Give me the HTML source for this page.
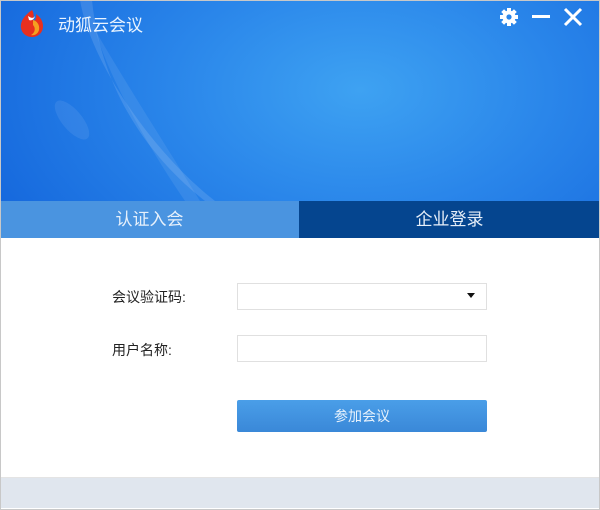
<!DOCTYPE html>
<html><head><meta charset="utf-8"><style>
*{margin:0;padding:0;box-sizing:border-box}
body{width:600px;height:510px;overflow:hidden;background:#fff;font-family:"Liberation Sans","Noto Sans CJK SC",sans-serif;position:relative}
.win{position:absolute;left:0;top:0;width:600px;height:510px;border:1px solid #c8c8c8}
.hdr{position:absolute;left:0;top:0;width:600px;height:201px;overflow:hidden;
background:radial-gradient(ellipse 420px 260px at 360px 90px,#3ea2f2 0%,#2a86ea 45%,#1466dc 100%)}
.title{position:absolute;left:58px;top:11px;color:#eaf4ff;font-size:17px}
.tabs{position:absolute;top:201px;left:0;width:600px;height:37px}
.t1{position:absolute;left:0;top:0;width:299px;height:37px;background:#4a94e0;color:#e6f0fb;font-size:17px;text-align:center;line-height:37px}
.t2{position:absolute;left:299px;top:0;width:301px;height:37px;background:#05458f;color:#e6eef8;font-size:17px;text-align:center;line-height:37px}
.lbl{position:absolute;left:112px;font-size:14px;color:#222}
.inp{position:absolute;left:237px;width:250px;height:27px;border:1px solid #e0e0e0;background:#fff}
.btn{position:absolute;left:237px;top:400px;width:250px;height:32px;background:linear-gradient(#4a9ee8,#3a88d8);color:#e8f2fc;font-size:14px;text-align:center;line-height:32px;border-radius:2px}
.ftr{position:absolute;left:1px;top:477px;width:598px;height:31px;background:#e0e6ee;border-top:1px solid #e4e4e4}
</style></head><body>
<div class="hdr">
<svg width="600" height="201" style="position:absolute;left:0;top:0">
<path d="M80 0 C90 60 150 150 215 201 L205 201 C140 150 100 80 92 0Z" fill="#ffffff" opacity="0.12"/>
<path d="M95 30 C130 90 175 160 200 201 L185 201 C150 150 110 80 95 30Z" fill="#ffffff" opacity="0.08"/>
<ellipse cx="72" cy="120" rx="10" ry="24" transform="rotate(-40 72 120)" fill="#fff" opacity="0.08"/>
<g transform="translate(19,8)">
<path d="M13 2 C6 7 1 13 2 20 C3 26 8 29 13 29 C19 29 24 25 24 18 C24 12 20 8 17 6 C18 10 16 13 14 13 C15 9 15 5 13 2Z" fill="#e8301e"/>
<path d="M14 12 C18 13 21 17 20 22 C19 26 15 28 12 27 C16 25 17 20 14 17Z" fill="#f5a020"/>
<path d="M9 8 C12 10 14 11 16 8 C15 12 12 13 10 12Z" fill="#fff"/>
</g>
<g transform="translate(509,17)" fill="#fff">
<circle r="6.5"/>
<g><rect x="-2" y="-9" width="4" height="18"/><rect x="-9" y="-2" width="18" height="4"/>
<rect x="-2" y="-9" width="4" height="18" transform="rotate(45)"/><rect x="-2" y="-9" width="4" height="18" transform="rotate(-45)"/></g>
<circle r="2.6" fill="#2a86ea"/>
</g>
<rect x="532" y="15" width="18" height="3" fill="#fff"/>
<path d="M565 9 L581 25 M581 9 L565 25" stroke="#fff" stroke-width="3"/>
</svg>
<div class="title">动狐云会议</div>
</div>
<div class="tabs"><div class="t1">认证入会</div><div class="t2">企业登录</div></div>
<div class="lbl" style="top:287px">会议验证码:</div>
<div class="inp" style="top:283px"><span style="position:absolute;right:11px;top:9px;width:0;height:0;border-left:4px solid transparent;border-right:4px solid transparent;border-top:5px solid #111"></span></div>
<div class="lbl" style="top:340px">用户名称:</div>
<div class="inp" style="top:335px"></div>
<div class="btn">参加会议</div>
<div class="ftr"></div>
<div class="win"></div>
</body></html>
